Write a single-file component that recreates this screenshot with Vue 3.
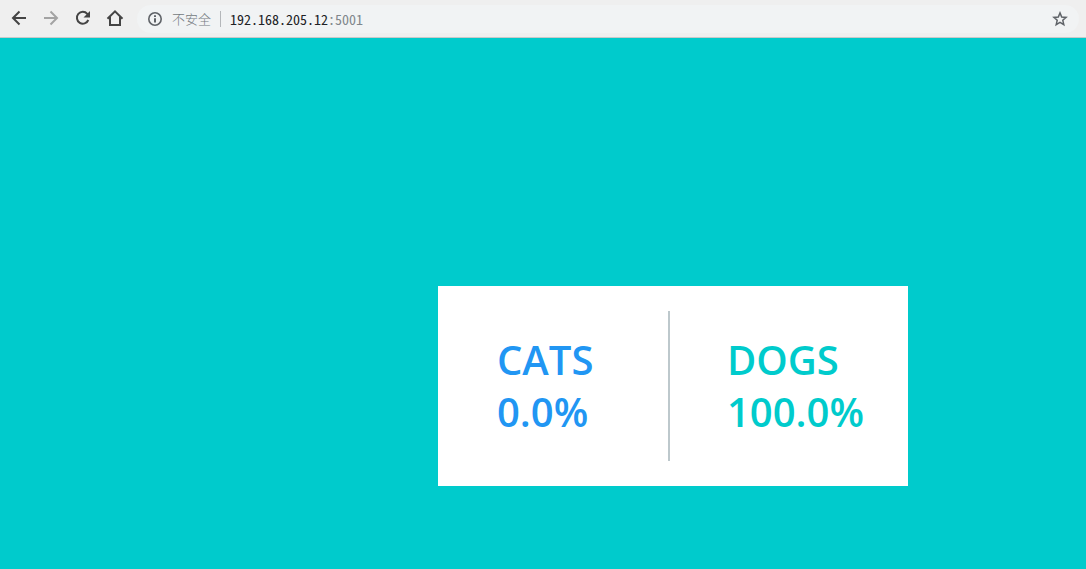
<script setup>
const results = [
  { name: 'CATS', share: '0.0%', kind: 'cats' },
  { name: 'DOGS', share: '100.0%', kind: 'dogs' },
]
</script>

<template>
  <div class="window">
    <header class="toolbar">
      <nav class="nav">
        <button type="button" aria-label="Back">
          <svg viewBox="0 0 20 20"><path d="M17 9H4M10.500 2.500 4 9l6.500 6.500" /></svg>
        </button>
        <button type="button" aria-label="Forward" class="muted">
          <svg viewBox="0 0 20 20"><path d="M3 9h13M9.500 2.500 16 9l-6.500 6.500" /></svg>
        </button>
        <button type="button" aria-label="Reload">
          <svg viewBox="0 0 20 20"><path d="M15.300 11a5.900 5.900 0 1 1-1-6.100l1.200 1.400" /><path class="solid" d="M17 2v6.500h-6.500z" /></svg>
        </button>
        <button type="button" aria-label="Home">
          <svg viewBox="0 0 20 20"><path d="M2.500 9.800 10 2.300l7.500 7.500M5 8v8h10V8" /></svg>
        </button>
      </nav>
      <div class="address">
        <svg class="info" viewBox="0 0 16 16"><circle cx="8" cy="8" r="6.200" /><path d="M8 7.200v4.300M8 4.300v1.800" /></svg>
        <span class="security">不安全</span>
        <span class="url">192.168.205.12<span class="port">:5001</span></span>
        <button type="button" class="star" aria-label="Bookmark">
          <svg viewBox="0 0 16 16"><path d="m8 1.900 1.700 4.100 4.400.4-3.300 2.900 1 4.300L8 11.300l-3.800 2.300 1-4.300-3.300-2.900 4.400-.4z" /></svg>
        </button>
      </div>
    </header>
    <main class="page">
      <section class="card">
        <div v-for="r in results" :key="r.kind" class="choice" :class="r.kind">
          <div>{{ r.name }}</div>
          <div>{{ r.share }}</div>
        </div>
      </section>
    </main>
  </div>
</template>

<style>
body {
  margin: 0;
}
</style>

<style scoped>
.window {
  display: flex;
  flex-direction: column;
  min-height: 100vh;
  background: #00cbcc;
}
.toolbar {
  display: flex;
  align-items: center;
  box-sizing: border-box;
  height: 38px;
  padding: 0 7px 0 9px;
  background: #efefef;
  border-bottom: 1px solid #c9c9c9;
}
.nav {
  display: flex;
  gap: 12px;
  margin-right: 12px;
}
button {
  display: flex;
  padding: 0;
  border: 0;
  background: none;
  color: #444;
}
button svg {
  width: 20px;
  height: 20px;
}
svg {
  fill: none;
  stroke: currentColor;
  stroke-width: 2;
}
.solid {
  fill: currentColor;
  stroke: none;
}
.muted {
  color: #a3a3a3;
}
.address {
  display: flex;
  flex: 1;
  align-items: center;
  height: 28px;
  padding: 0 11px 0 10px;
  border-radius: 14px;
  background: #f1f3f4;
  font-family: "Noto Sans Mono CJK SC", "DejaVu Sans Mono", monospace;
  font-size: 14px;
  line-height: 16px;
  color: #202124;
}
.info {
  width: 16px;
  height: 16px;
  color: #5f6368;
}
.info circle {
  stroke-width: 1.600;
}
.security {
  margin-left: 9px;
  padding-right: 9px;
  border-right: 1px solid #b4b7ba;
  font-family: "Noto Sans CJK SC", sans-serif;
  font-weight: 300;
  font-size: 13px;
  color: #747a80;
}
.url {
  margin-left: 9px;
}
.port {
  color: #80868b;
}
.star {
  margin-left: auto;
  color: #5f6368;
}
.star svg {
  width: 16px;
  height: 16px;
  stroke-width: 1.500;
}
.page {
  display: flex;
  justify-content: center;
  padding: 248px 0 83px 260px;
}
.card {
  display: flex;
  box-sizing: border-box;
  width: 470px;
  padding: 25px 0;
  background: #fff;
}
.choice {
  box-sizing: border-box;
  padding: 23px 0 23px 59px;
  font-family: "Open Sans", sans-serif;
  font-weight: 600;
  font-size: 40px;
  line-height: 52px;
}
.cats {
  width: 232px;
  border-right: 2px solid #bdc8cc;
  color: #2196f3;
}
.dogs {
  flex: 1;
  padding-left: 57px;
  color: #00cbcc;
}
</style>
